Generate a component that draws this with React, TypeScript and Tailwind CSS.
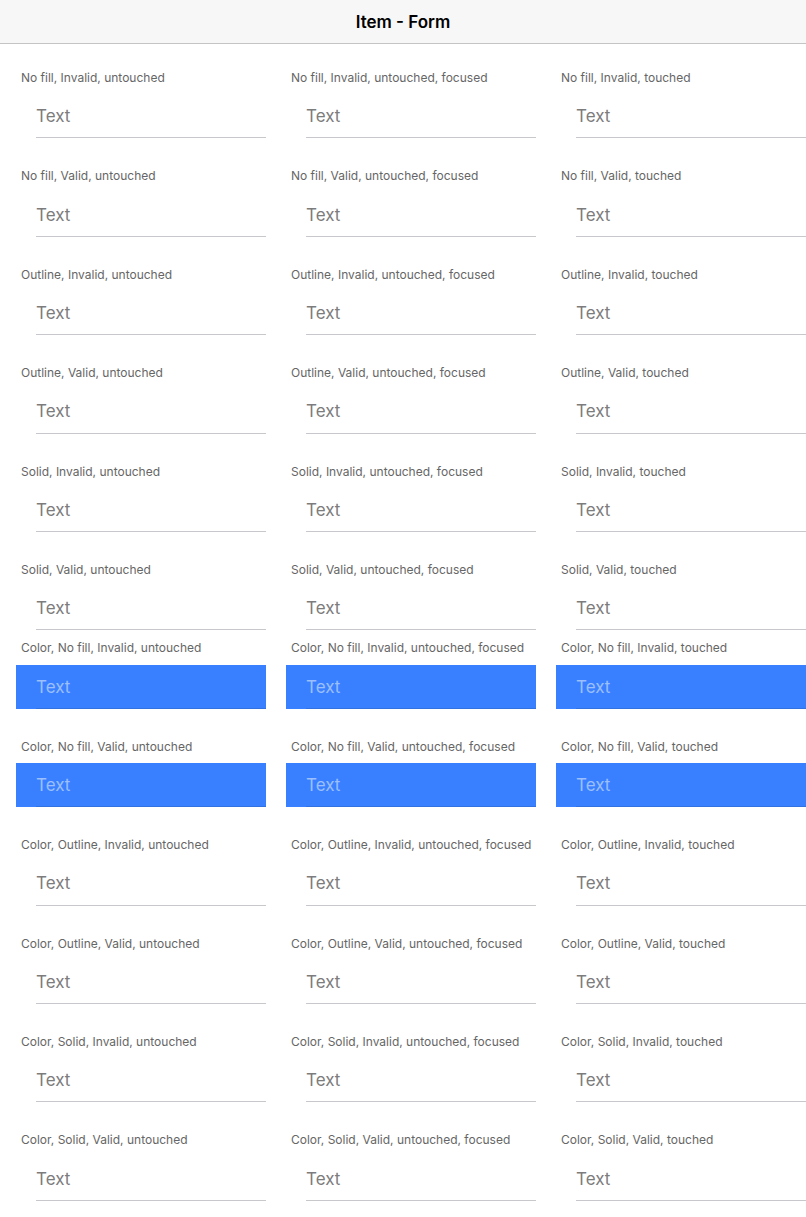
const fills = ['No fill', 'Outline', 'Solid'];
const validity = ['Invalid', 'Valid'];
const states = ['untouched', 'untouched, focused', 'touched'];

interface Row {
  color: boolean;
  fill: string;
  valid: string;
}

const rows: Row[] = [];
for (const color of [false, true]) {
  for (const fill of fills) {
    for (const valid of validity) {
      rows.push({ color, fill, valid });
    }
  }
}

function Cell({ row, state, first, tight }: { row: Row; state: string; first: boolean; tight: boolean }) {
  const label = `${row.color ? 'Color, ' : ''}${row.fill}, ${row.valid}, ${state}`;
  const blue = row.color && row.fill === 'No fill';
  return (
    <div className={first ? 'pt-[27px]' : tight ? 'pt-[11px]' : 'pt-[31px]'}>
      <div className="pl-[5px] text-[12px] leading-[14.4px] text-[#666] whitespace-nowrap">{label}</div>
      <div className={`mt-[9px] h-[44px] pl-5 ${blue ? 'bg-[#3880ff]' : ''}`}>
        <div
          className={`h-full flex items-center pt-[2px] border-b ${
            blue ? 'border-[#3171e0] text-white/50' : 'border-[#c8c7cc] text-[#7c7c7c]'
          } text-[17px]`}
        >
          Text
        </div>
      </div>
    </div>
  );
}

export default function App() {
  return (
    <div className="w-[806px] min-h-[1217px] bg-white font-['Inter','Liberation_Sans',sans-serif] overflow-hidden">
      <header className="h-[44px] pt-[3px] bg-[#f7f7f7] border-b border-[#c4c4c4] flex items-center justify-center">
        <h1 className="text-[17px] font-semibold text-black">Item - Form</h1>
      </header>
      <div className="pl-4">
        {rows.map((row, i) => (
          <div key={i} className="grid grid-cols-[250px_250px_250px] gap-x-5">
            {states.map((state) => (
              <Cell key={state} row={row} state={state} first={i === 0} tight={i === 6} />
            ))}
          </div>
        ))}
      </div>
    </div>
  );
}
